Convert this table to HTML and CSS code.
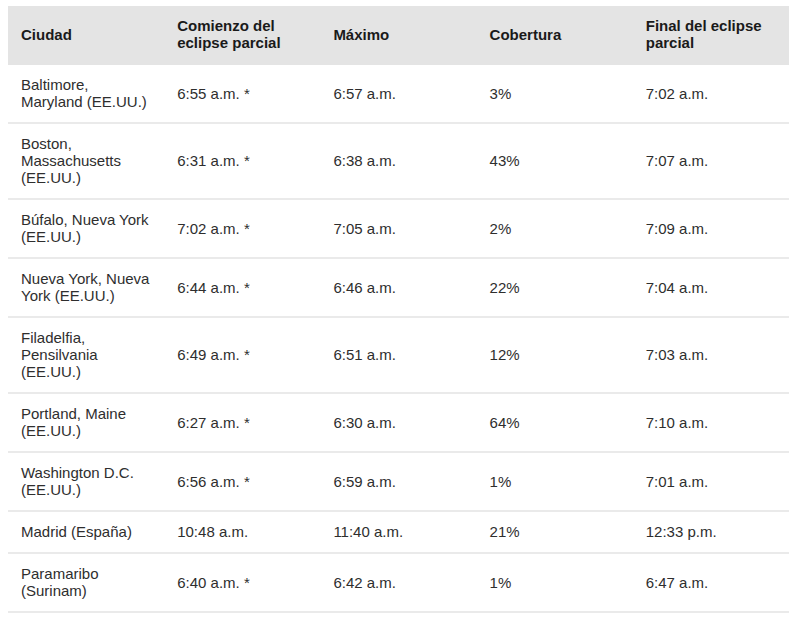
FILE: index.html
```html
<!DOCTYPE html>
<html lang="es">
<head>
<meta charset="utf-8">
<title>Eclipse parcial</title>
<link rel="stylesheet" href="styles.css">
</head>
<body>
<table class="eclipse">
  <thead>
    <tr>
      <th>Ciudad</th>
      <th>Comienzo del eclipse parcial</th>
      <th>Máximo</th>
      <th>Cobertura</th>
      <th>Final del eclipse parcial</th>
    </tr>
  </thead>
  <tbody>
    <tr><td>Baltimore, Maryland (EE.UU.)</td><td>6:55 a.m. *</td><td>6:57 a.m.</td><td>3%</td><td>7:02 a.m.</td></tr>
    <tr><td>Boston, Massachusetts (EE.UU.)</td><td>6:31 a.m. *</td><td>6:38 a.m.</td><td>43%</td><td>7:07 a.m.</td></tr>
    <tr><td>Búfalo, Nueva York (EE.UU.)</td><td>7:02 a.m. *</td><td>7:05 a.m.</td><td>2%</td><td>7:09 a.m.</td></tr>
    <tr><td>Nueva York, Nueva York (EE.UU.)</td><td>6:44 a.m. *</td><td>6:46 a.m.</td><td>22%</td><td>7:04 a.m.</td></tr>
    <tr><td>Filadelfia, Pensilvania (EE.UU.)</td><td>6:49 a.m. *</td><td>6:51 a.m.</td><td>12%</td><td>7:03 a.m.</td></tr>
    <tr><td>Portland, Maine (EE.UU.)</td><td>6:27 a.m. *</td><td>6:30 a.m.</td><td>64%</td><td>7:10 a.m.</td></tr>
    <tr><td>Washington D.C. (EE.UU.)</td><td>6:56 a.m. *</td><td>6:59 a.m.</td><td>1%</td><td>7:01 a.m.</td></tr>
    <tr><td>Madrid (España)</td><td>10:48 a.m.</td><td>11:40 a.m.</td><td>21%</td><td>12:33 p.m.</td></tr>
    <tr><td>Paramaribo (Surinam)</td><td>6:40 a.m. *</td><td>6:42 a.m.</td><td>1%</td><td>6:47 a.m.</td></tr>
  </tbody>
</table>
</body>
</html>
```
FILE: styles.css
```css
html, body {
  background: #ffffff;
}
body {
  margin: 6px 8px;
  font-family: "Liberation Sans", Arial, sans-serif;
  font-size: 15px;
  line-height: 17px;
  color: #2e2e2e;
}
.eclipse {
  width: 781px;
  table-layout: fixed;
  border-collapse: collapse;
}
.eclipse th,
.eclipse td {
  text-align: left;
  vertical-align: middle;
  padding: 11px 13px 12px;
}
.eclipse th {
  background: #e4e4e4;
  color: #1a1a1a;
  font-weight: bold;
  padding-bottom: 14px;
}
.eclipse td {
  border-bottom: 2px solid #eaeaea;
}
```
